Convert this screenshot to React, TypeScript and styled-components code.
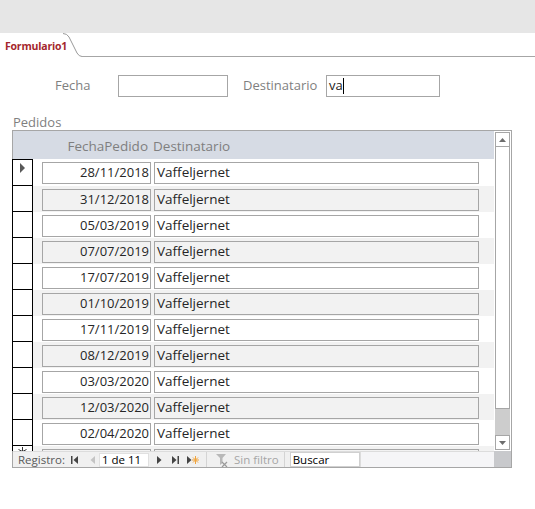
import React from 'react'
import styled, { createGlobalStyle } from 'styled-components'

const GlobalStyle = createGlobalStyle`
  html, body {
    margin: 0;
    background: #fff;
    font-family: "Open Sans", "Noto Sans", sans-serif;
  }
`

const Page = styled.div`
  width: 535px;
  height: 509px;
  overflow: hidden;
  background: #fff;
`

const TopBar = styled.div`
  height: 33px;
  background: #e6e6e6;
`

const TabStrip = styled.div`
  display: flex;
  height: 24px;
`

const Tab = styled.div`
  padding: 0 0 0 5px;
  width: 63px;
  font-size: 10.5px;
  font-weight: 700;
  color: #a4262c;
  line-height: 27px;
  letter-spacing: -0.2px;
  white-space: nowrap;
  box-sizing: border-box;
`

const TabEdge = styled.svg`
  display: block;
  flex: none;
`

const TabRest = styled.div`
  flex: 1;
  border-bottom: 1px solid #a6a6a6;
`

const FilterRow = styled.div`
  display: flex;
  align-items: center;
  margin: 18px 0 0 55px;
  height: 22px;
`

const FieldLabel = styled.div<{ $w: number }>`
  width: ${p => p.$w}px;
  font-size: 13px;
  color: #7f7f7f;
  margin-top: -2px;
`

const FieldInput = styled.div<{ $w: number; $gap?: number }>`
  width: ${p => p.$w}px;
  height: 22px;
  box-sizing: border-box;
  border: 1px solid #a6a6a6;
  margin-right: ${p => p.$gap ?? 0}px;
  font-size: 13px;
  line-height: 19px;
  padding-left: 2px;
  color: #222;
  display: flex;
`

const Caret = styled.span`
  display: inline-block;
  width: 1px;
  height: 16px;
  margin-top: 2px;
  background: #000;
`

const SectionLabel = styled.div`
  margin: 17px 0 0 13px;
  font-size: 13px;
  color: #7f7f7f;
  line-height: 16px;
`

const Subform = styled.div`
  margin-left: 12px;
  width: 500px;
  height: 338px;
  box-sizing: border-box;
  border: 1px solid #a6a6a6;
  display: grid;
  grid-template-columns: 481px 17px;
  grid-template-rows: 28px 292px 16px;
`

const Header = styled.div`
  background: #d6dbe4;
  display: flex;
  align-items: center;
  font-size: 13.5px;
  color: #7f7f7f;
  padding-top: 1px;
`

const HeadDate = styled.div`
  margin-left: 29px;
  width: 106px;
  text-align: right;
`

const HeadDest = styled.div`
  margin-left: 5px;
`

const Scrollbar = styled.div`
  grid-row: 1 / 3;
  grid-column: 2;
  display: flex;
  flex-direction: column;
  padding: 1px;
  background: #fff;
`

const ScrollBtn = styled.div`
  height: 15px;
  flex: none;
  box-sizing: border-box;
  border: 1px solid #a6a6a6;
  display: flex;
  align-items: center;
  justify-content: center;
  background: #fff;
`

const Thumb = styled.div`
  flex: none;
  height: 262px;
  box-sizing: border-box;
  border: 1px solid #a6a6a6;
  border-top: none;
  background: #fff;
`

const Track = styled.div`
  flex: 1;
  background: #cdcdcd;
`

const Body = styled.div`
  overflow-x: visible;
  overflow-y: clip;
`

const Row = styled.div<{ $alt: boolean }>`
  display: flex;
  height: 26px;
  background: ${p => (p.$alt ? '#f2f2f2' : '#fff')};
  &:first-child {
    height: 27px;
  }
`

const Selector = styled.div`
  width: 21px;
  margin-left: -1px;
  flex: none;
  box-sizing: border-box;
  border: 1px solid #000;
  border-top: none;
  background: #fff;
  position: relative;
  ${Row}:first-child & {
    border-top: 1px solid #000;
  }
`

const Pointer = styled.div`
  position: absolute;
  left: 7px;
  top: 3px;
  width: 0;
  height: 0;
  border-top: 5px solid transparent;
  border-bottom: 5px solid transparent;
  border-left: 5px solid #595959;
`

const NewMark = styled.svg`
  position: absolute;
  left: 5px;
  top: 1px;
`

const Cell = styled.div<{ $w: number; $alt: boolean; $right?: boolean }>`
  width: ${p => p.$w}px;
  height: 22px;
  margin-top: 3px;
  box-sizing: border-box;
  border: 1px solid #a6a6a6;
  background: ${p => (p.$alt ? '#f2f2f2' : '#fff')};
  font-size: 13.5px;
  line-height: 19px;
  color: #262626;
  text-align: ${p => (p.$right ? 'right' : 'left')};
  padding: 0 2px;
  white-space: nowrap;
  overflow: hidden;
`

const DateCell = styled(Cell)`
  margin-left: 9px;
  margin-right: 3px;
  font-size: 13px;
  padding-right: 1px;
`

const NavBar = styled.div`
  display: flex;
  align-items: center;
  background: #f0f0f0;
  border-top: 1px solid #dcdcdc;
  font-size: 11.5px;
  color: #595959;
  height: 16px;
  box-sizing: border-box;
`

const NavLabel = styled.span`
  margin-left: 5px;
  width: 53px;
`

const NavBtn = styled.svg<{ $gap: number }>`
  display: block;
  flex: none;
  margin-right: ${p => p.$gap}px;
`

const RecordBox = styled.div`
  width: 50px;
  height: 14px;
  box-sizing: border-box;
  background: #fff;
  border: 1px solid #e0e0e0;
  color: #000;
  line-height: 12px;
  padding-left: 2px;
  margin-right: 8px;
`

const Divider = styled.div<{ $l: number; $r: number }>`
  width: 1px;
  height: 15px;
  background: #d4d4d4;
  margin: 0 ${p => p.$r}px 0 ${p => p.$l}px;
`

const Disabled = styled.span`
  color: #a6a6a6;
`

const SearchBox = styled.div`
  width: 70px;
  height: 15px;
  box-sizing: border-box;
  background: #fff;
  border: 1px solid #d0d0d0;
  color: #000;
  line-height: 13px;
  padding-left: 2px;
`

const NavFill = styled.div`
  flex: 1;
  align-self: stretch;
  background: #f5f5f7;
  border-left: 1px solid #dcdcdc;
`

const Corner = styled.div`
  background: #c8c9cc;
`

const dates = [
  '28/11/2018', '31/12/2018', '05/03/2019', '07/07/2019', '17/07/2019', '01/10/2019',
  '17/11/2019', '08/12/2019', '03/03/2020', '12/03/2020', '02/04/2020',
]

const Arrow = ({ up }: { up: boolean }) => (
  <svg width="7" height="4" viewBox="0 0 7 4">
    <path d={up ? 'M0 4 L3.5 0 L7 4 Z' : 'M0 0 L3.5 4 L7 0 Z'} fill="#6d6d6d" />
  </svg>
)

export default function App() {
  return (
    <Page>
      <GlobalStyle />
      <TopBar />
      <TabStrip>
        <Tab>Formulario1</Tab>
        <TabEdge width="19" height="24" viewBox="0 0 19 24">
          <path d="M0 0.5 Q4 0.5 6 4 L14 20 Q16 23.5 19 23.5" fill="none" stroke="#9a9a9a" strokeWidth="1" />
        </TabEdge>
        <TabRest />
      </TabStrip>
      <FilterRow>
        <FieldLabel $w={63}>Fecha</FieldLabel>
        <FieldInput $w={110} $gap={15} />
        <FieldLabel $w={83}>Destinatario</FieldLabel>
        <FieldInput $w={114}>va<Caret /></FieldInput>
      </FilterRow>
      <SectionLabel>Pedidos</SectionLabel>
      <Subform>
        <Header>
          <HeadDate>FechaPedido</HeadDate>
          <HeadDest>Destinatario</HeadDest>
        </Header>
        <Scrollbar>
          <ScrollBtn><Arrow up /></ScrollBtn>
          <Thumb />
          <Track />
          <ScrollBtn><Arrow up={false} /></ScrollBtn>
        </Scrollbar>
        <Body>
          {dates.map((d, i) => (
            <Row key={d + i} $alt={i % 2 === 1}>
              <Selector>{i === 0 && <Pointer />}</Selector>
              <DateCell $w={109} $alt={i % 2 === 1} $right>{d}</DateCell>
              <Cell $w={325} $alt={i % 2 === 1}>Vaffeljernet</Cell>
            </Row>
          ))}
          <Row $alt>
            <Selector>
              <NewMark width="9" height="9" viewBox="0 0 9 9">
                <path d="M4.5 0 V9 M0.5 2.5 L8.5 6.5 M8.5 2.5 L0.5 6.5" stroke="#333" strokeWidth="1" />
              </NewMark>
            </Selector>
            <DateCell $w={109} $alt $right />
            <Cell $w={325} $alt />
          </Row>
        </Body>
        <NavBar>
          <NavLabel>Registro:</NavLabel>
          <NavBtn $gap={12} width="7" height="8" viewBox="0 0 7 8">
            <rect x="0" y="0" width="1.5" height="8" fill="#444" />
            <path d="M7 0 L2.5 4 L7 8 Z" fill="#444" />
          </NavBtn>
          <NavBtn $gap={4} width="5" height="8" viewBox="0 0 5 8">
            <path d="M5 0 L0.5 4 L5 8 Z" fill="#c4c4c4" />
          </NavBtn>
          <RecordBox>1 de 11</RecordBox>
          <NavBtn $gap={10} width="5" height="8" viewBox="0 0 5 8">
            <path d="M0 0 L4.5 4 L0 8 Z" fill="#444" />
          </NavBtn>
          <NavBtn $gap={8} width="7" height="8" viewBox="0 0 7 8">
            <path d="M0 0 L4.5 4 L0 8 Z" fill="#444" />
            <rect x="5.5" y="0" width="1.5" height="8" fill="#444" />
          </NavBtn>
          <NavBtn $gap={0} width="12" height="10" viewBox="0 0 12 10">
            <path d="M0 1 L4.5 5 L0 9 Z" fill="#444" />
            <g stroke="#f0a33a" strokeWidth="1">
              <path d="M8.5 1 V9 M5 5 H12 M6 2.5 L11 7.5 M11 2.5 L6 7.5" />
            </g>
          </NavBtn>
          <Divider $l={7} $r={8} />
          <NavBtn $gap={5} width="14" height="14" viewBox="0 0 14 14">
            <path d="M1 1 H11 L7.5 5 V10 L5 12 V5 Z" fill="#b8b8b8" />
            <path d="M7 9 L12 14 M12 9 L7 14" stroke="#9a9a9a" strokeWidth="1.2" />
          </NavBtn>
          <Disabled>Sin filtro</Disabled>
          <Divider $l={5} $r={5} />
          <SearchBox>Buscar</SearchBox>
          <NavFill />
        </NavBar>
        <Corner />
      </Subform>
    </Page>
  )
}
